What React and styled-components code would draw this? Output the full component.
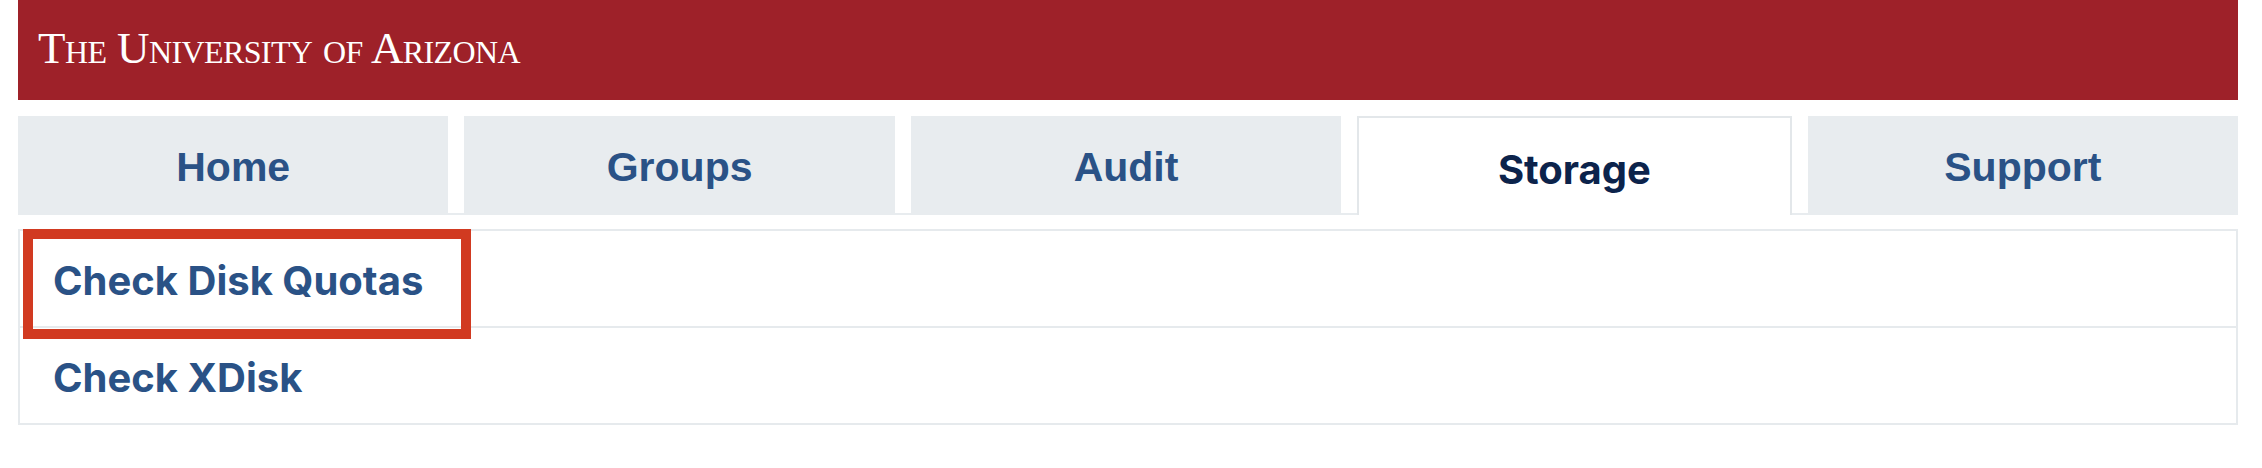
import styled, { createGlobalStyle } from "styled-components";

const GlobalStyle = createGlobalStyle`
  body {
    margin: 0;
    background: #ffffff;
    font-family: "Liberation Sans", Arial, sans-serif;
  }
`;

const Page = styled.div`
  padding: 0 24px 0 18px;
`;

const Banner = styled.header`
  height: 100px;
  background: #9e2129;
  display: flex;
  align-items: center;
  padding: 0 0 4px 20px;
  box-sizing: border-box;
`;

const Wordmark = styled.span`
  font-family: "Liberation Serif", "Times New Roman", serif;
  font-variant: small-caps;
  font-size: 45px;
  letter-spacing: -0.6px;
  color: #ffffff;
`;

const TabList = styled.nav`
  display: flex;
  gap: 16px;
  margin-top: 16px;
  border-bottom: 2px solid #e8ecef;
`;

const Tab = styled.a`
  flex: 1;
  height: ${(p) => (p.active ? "99px" : "97px")};
  margin-bottom: ${(p) => (p.active ? "-2px" : "0")};
  box-sizing: border-box;
  display: flex;
  align-items: center;
  justify-content: center;
  padding-top: 6px;
  background: ${(p) => (p.active ? "#ffffff" : "#e8ecef")};
  border: ${(p) => (p.active ? "2px solid #e3e7ea" : "none")};
  border-bottom: none;
  font-family: ${(p) =>
    p.active ? '"Inter", "Liberation Sans", sans-serif' : '"Liberation Sans", Arial, sans-serif'};
  font-weight: 700;
  font-size: ${(p) => (p.active ? "40px" : "41px")};
  color: ${(p) => (p.active ? "#0c234b" : "#2a5286")};
  text-decoration: none;
`;

const Panel = styled.div`
  position: relative;
  margin-top: 14px;
  border: 2px solid #e6eaed;
`;

const Item = styled.a`
  display: flex;
  align-items: center;
  height: 95px;
  box-sizing: border-box;
  padding: 3px 0 0 33px;
  font-family: "Inter", "Liberation Sans", sans-serif;
  font-weight: 700;
  font-size: 40px;
  color: #2a5286;
  text-decoration: none;
  & + & {
    height: 97px;
    border-top: 2px solid #e6eaed;
  }
`;

const Highlight = styled.div`
  position: absolute;
  top: -2px;
  left: 3px;
  width: 448px;
  height: 110px;
  box-sizing: border-box;
  border: 10px solid #d13a21;
  pointer-events: none;
`;

const tabs = ["Home", "Groups", "Audit", "Storage", "Support"];

export default function App() {
  return (
    <Page>
      <GlobalStyle />
      <Banner>
        <Wordmark>The University of Arizona</Wordmark>
      </Banner>
      <TabList>
        {tabs.map((t) => (
          <Tab key={t} active={t === "Storage"}>
            {t}
          </Tab>
        ))}
      </TabList>
      <Panel>
        <Item>Check Disk Quotas</Item>
        <Item>Check XDisk</Item>
        <Highlight />
      </Panel>
    </Page>
  );
}
